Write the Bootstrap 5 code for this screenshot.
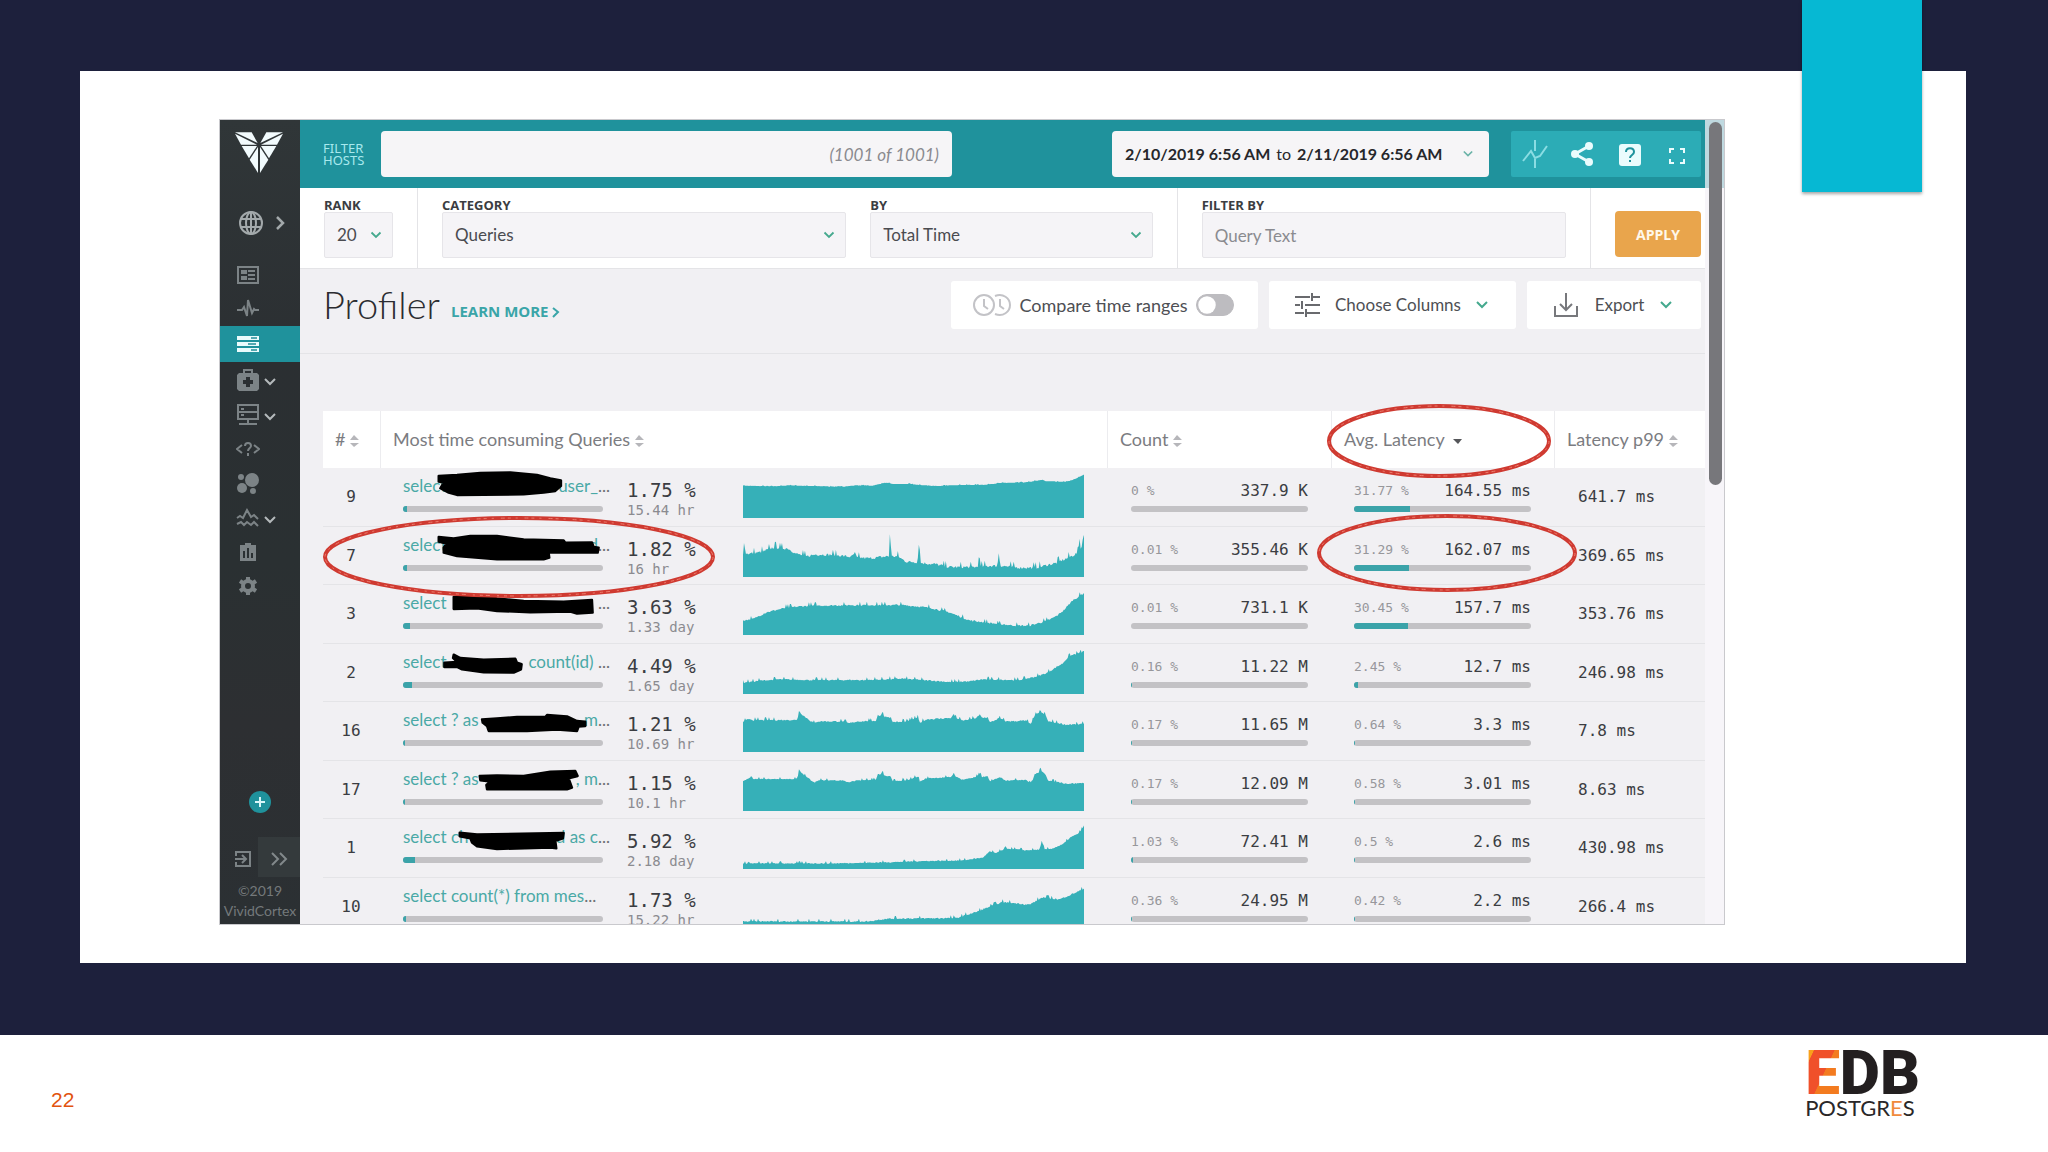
<!DOCTYPE html>
<html lang="en">
<head>
<meta charset="utf-8">
<meta name="viewport" content="width=device-width, initial-scale=1">
<title>Profiler</title>
<link href="https://cdn.jsdelivr.net/npm/bootstrap@5.3.0/dist/css/bootstrap.min.css" rel="stylesheet">
<style>
:root{--teal:#1f929c;--chart:#36b0b8;--ink:#3b3d42;--soft:#7b7c81;--line:#e4e4e7;--panel:#f1f0f3}
body{font-family:Lato,"Open Sans",sans-serif;color:var(--ink);background:#fff}
button,input,select{font-family:inherit}
.stage{background:#1d203c;padding:71px 82px 72px 80px;min-height:0}
.sheet{background:#fff;padding:48px 241px 38px 139px;min-height:0}
.ribbon{position:absolute;top:0;right:126px;width:120px;height:192px;background:#06b8d3;box-shadow:0 2px 3px rgba(0,0,0,.35)}
.slide-foot{height:117px;padding:0 128px 0 51px}
.page-no{font:21px "Liberation Sans",sans-serif;color:#e2530f;padding-top:12px}
.app{border:1px solid #c9c9cd;background:var(--panel);overflow:hidden;min-height:0}

.side{width:80px;flex:none;background:linear-gradient(#303638,#2b2f32 30%,#2a3032 55%,#2d2f32 75%,#2b3033);color:#7c8386}
.side a,.side button{color:inherit;background:none;border:0;padding:0}
.side .brand{height:79px;padding:12px 0 0 15px}
.side .globe{height:48px;padding-left:18px;color:#a3a9ab;gap:11px}
.menu{padding-top:11px}
.menu a{height:34px;padding-left:16px;gap:4px}
.menu a.sub{height:35px}
.menu a.on{height:36px;background:var(--teal);color:#e9fbfc}
.menu .chev{color:#b4b9bb}
.side .collapse-btn{width:42px;height:40px;background:#343a3c;color:#82898b}
.side .exit-btn{width:38px;padding-left:8px}
.copyright{font-size:14px;line-height:20px;color:#74797b;padding:4px 0 3px}

.topbar{background:var(--teal);height:68px;padding:0 4px 0 23px}
.host-label{width:58px;font:13px/12px "Noto Sans",sans-serif;color:#a8e9ee}
.host-input{height:46px;border:0;border-radius:4px;background:#f6f5f7;text-align:right;padding:0 13px;margin-right:160px;font-size:17px;min-width:0}
.host-input::placeholder{color:#8a8a8f;font-style:italic}
.dates{height:46px;border:0;border-radius:4px;background:#f6f5f7;width:377px;padding:0 16px 0 13px;gap:6px;font-size:16px;color:#26272b;margin-right:22px}
.tools{height:46px;width:190px;background:#2cacb6;border-radius:2px}
.tools button{background:none;border:0;padding:0;width:48px;color:#eafcfd}

.filters{background:#fff;height:81px;border-bottom:1px solid var(--line)}
.grp{padding:11px 24px 0;border-right:1px solid var(--line)}
.grp label{display:block;font:bold 13px/12px "Open Sans",sans-serif;color:#3b3d42;height:13px}
.field{width:100%;height:46px;border:1px solid #e6e5e9;border-radius:2px;background-color:#f5f4f7;font-size:17px;color:#4a4b50;padding:0 12px;box-shadow:none}
select.field{background-image:url("data:image/svg+xml,%3Csvg xmlns='http://www.w3.org/2000/svg' viewBox='0 0 12 12'%3E%3Cpath d='M1.500 3.500l4.500 4.500 4.500-4.500' fill='none' stroke='%2345a98e' stroke-width='1.800'/%3E%3C/svg%3E");background-size:12px;background-position:right 10px center;padding-right:26px}
.field::placeholder{color:#8a8b90;opacity:1}
.g-rank{width:118px;flex:none}
.g-pair{flex:712 1 0;gap:24px}
.f-cat{flex:405 1 0}.f-by{flex:283 1 0}
.g-text{flex:365 1 0}
.apply{width:86px;height:46px;margin:23px 4px 0 24px;border:0;border-radius:4px;background:#e9a54c;color:#fff8ea;font:bold 14px "Open Sans",sans-serif}

.titlebar{height:85px;border-bottom:1px solid var(--line);padding:12px 4px 0 23px;gap:11px}
.titlebar h1{font-weight:300;font-size:38px;line-height:46px;color:#2b2c30;margin:0}
.learn{font:bold 15px/46px "Open Sans",sans-serif;color:#3aa5a8;text-decoration:none;padding-top:7px}
.tile{height:48px;border:0;border-radius:3px;background:#fff;font-size:17px;color:#4e4f54}
.tile-cmp{width:307px;padding:0 24px 0 22px;font-size:18px}.tile-col{width:247px;padding:0 28px 0 25px}.tile-exp{width:174px;padding:0 29px 0 26px}
.tile .form-check-input{width:38px;height:22px;margin:0;background-color:#bdbcc0;border-color:#bdbcc0;box-shadow:none;float:none;--bs-form-switch-bg:url("data:image/svg+xml,%3Csvg xmlns='http://www.w3.org/2000/svg' viewBox='-4 -4 8 8'%3E%3Ccircle r='3.500' fill='%23fff'/%3E%3C/svg%3E");background-image:var(--bs-form-switch-bg)}

.grid-wrap{padding:57px 0 0 23px;min-height:0}
.qtable{width:100%;table-layout:fixed;border-collapse:separate;border-spacing:0}
.qtable th{height:57px;background:#fff;font-weight:400;font-size:18px;color:var(--soft);padding:0 0 0 12px;border-right:1px solid #ececef}
.qtable th:last-child{border-right:0}
.qtable td{height:58px;padding:0;border-bottom:1px solid var(--line);vertical-align:top}
.qtable tr:nth-child(odd) td{height:59px}
.c-rank{width:58px}.c-count{width:224px}.c-avg{width:223px}.c-p99{width:150px}
.sort{color:#b6b6ba;margin-left:5px}
.mono{font-family:"DejaVu Sans Mono","Liberation Mono",monospace}
.qtable .rank{font-size:16px;line-height:57px;text-align:center;padding-right:2px}
.qtable .q{padding-left:22px}
.qname{width:207px;padding-top:6px}
.qname a{color:#4aa9a6;text-decoration:none;font-size:17px;line-height:24px;height:24px;white-space:pre}
.dots{color:#6d6e72}
.meter{height:6px;border-radius:3px;background:#c3c2c5;overflow:hidden;margin-top:8px}
.qname .meter{width:200px}
.meter>div{height:6px;background:#3ba3a9;min-width:0}
.share{width:133px;flex:none;padding:10px 0 0 17px;font-size:19px;line-height:24px;white-space:nowrap}
.share div+div{font-size:14px;line-height:16px;color:#8b8b90}
.spark{height:44px;margin:6px 24px 0 0;display:block;min-width:0}
.num{padding-top:13px}
.num .top{height:17px;line-height:20px;font-size:16px;white-space:nowrap}
.num .pct{font-size:13px;color:#97979b}
.n-count{margin-left:23px;width:177px}
.n-avg{margin-left:22px;width:177px}
.qtable .p99{font-size:16px;line-height:57px;padding-left:23px;white-space:nowrap}
.blot{position:absolute;left:0;top:0;width:210px;height:59px}
.ring{position:absolute;overflow:visible}
.ring-query{left:24px;top:163px;width:391px;height:81px}
.ring-head{right:154px;top:51px;width:223px;height:72px}
.ring-cell{right:129px;top:161px;width:258px;height:77px}
.scroll{width:19px;flex:none;background:linear-gradient(#bfd9e0 0 68px,#f7f5f9 68px)}
.thumb{width:13px;height:363px;border-radius:7px;background:#77777b;margin:2px 0 0 4px}
.logo-edb{font:900 62px/44px Roboto,sans-serif;color:#231f20}
.logo-edb .e{background:linear-gradient(115deg,#f9a11b 22%,#f0502a 23% 52%,#f37b20 53%);-webkit-background-clip:text;background-clip:text;color:transparent}
.logo-sub{font:22px/26px Lato,sans-serif;color:#2a2728}
.logo-sub span{color:#f08a3c}
</style>
<script src="https://cdn.jsdelivr.net/npm/bootstrap@5.3.0/dist/js/bootstrap.bundle.min.js"></script>
</head>
<body>
<div class="vh-100 d-flex flex-column position-relative">
 <div class="stage flex-grow-1 d-flex">
  <div class="sheet flex-grow-1 d-flex">
   <div class="app flex-grow-1 d-flex">

    <aside class="side d-flex flex-column">
     <a href="#" class="brand d-block" aria-label="Home"><svg width="48" height="44" viewBox="0 0 144 130" fill="#f2fbfd"><path d="M0 0h50l18 32z"/><path d="M0 4l66 33H18z"/><path d="M94 0h50L76 32z"/><path d="M144 4L78 37h48z"/><path d="M20 41h46L42 78z"/><path d="M78 41h46l-22 37z"/><path d="M69 44v78L44 82z"/><path d="M75 44v78l25-40z"/></svg></a>
     <a href="#" class="globe d-flex align-items-center" aria-label="Environments"><svg width="26" height="26" viewBox="0 0 26 26" fill="none" stroke="currentColor" stroke-width="2"><circle cx="13" cy="13" r="11"/><ellipse cx="13" cy="13" rx="5" ry="11"/><path d="M3 9h20M3 17h20M13 2v22"/></svg><svg width="10" height="16" viewBox="0 0 10 16" fill="none" stroke="currentColor" stroke-width="2.500"><path d="M2 2l6 6-6 6"/></svg></a>
     <nav class="menu d-flex flex-column">
      <a href="#" class="d-flex align-items-center" aria-label="Summary"><svg width="24" height="24" viewBox="0 0 24 24" fill="currentColor"><path d="M1 3h22v18H1zM3 5v14h18V5z" fill-rule="evenodd"/><path d="M5 7h6v4H5zM5 13h6v4H5zM12 7h7v2h-7zM12 11h7v2h-7zM12 15h7v2h-7z"/></svg></a>
      <a href="#" class="d-flex align-items-center" aria-label="Activity"><svg width="24" height="24" viewBox="0 0 24 24" fill="none" stroke="currentColor" stroke-width="2"><path d="M1 13h5l2-3 3 9 1-16 4 13 2-4 1 1h4"/></svg></a>
      <a href="#" class="on d-flex align-items-center" aria-label="Profiler"><svg width="24" height="24" viewBox="0 0 24 24" fill="currentColor"><path d="M1 4h22v4H1zM1 10h22v4H1zM1 16h22v4H1z"/><path d="M15 5h6v2h-6zM12 11h8v2h-8zM15 17h6v2h-6z" fill="#55a9b1"/></svg></a>
      <a href="#" class="sub d-flex align-items-center" aria-label="Health"><svg width="24" height="24" viewBox="0 0 24 24"><path fill="currentColor" fill-rule="evenodd" d="M7 5V1h10v4h4l2 2v14l-2 2H3l-2-2V7l2-2zM9 3v2h6V3zM10 9v3H7v4h3v3h4v-3h3v-4h-3V9z"/></svg><svg class="chev" width="12" height="12" viewBox="0 0 12 12" fill="none" stroke="currentColor" stroke-width="2"><path d="M1 5l5 5 5-5"/></svg></a>
      <a href="#" class="sub d-flex align-items-center" aria-label="Hosts"><svg width="24" height="24" viewBox="0 0 24 24" fill="none" stroke="currentColor" stroke-width="2"><path d="M2 2h20v14H2zM2 9h20M12 16v5M3 21h18M5 6h3M5 12h3"/></svg><svg class="chev" width="12" height="12" viewBox="0 0 12 12" fill="none" stroke="currentColor" stroke-width="2"><path d="M1 5l5 5 5-5"/></svg></a>
      <a href="#" class="d-flex align-items-center" aria-label="Queries"><svg width="24" height="24" viewBox="0 0 24 24" fill="none" stroke="currentColor" stroke-width="2"><path d="M6 8l-5 4 5 4M18 8l5 4-5 4M9 9c0-4 6-4 6 0 0 2-3 2-3 5M12 16v3"/></svg></a>
      <a href="#" class="d-flex align-items-center" aria-label="Explorer"><svg width="24" height="24" viewBox="0 0 24 24" fill="currentColor"><circle cx="16" cy="9" r="7"/><circle cx="5" cy="6" r="3"/><circle cx="6" cy="17" r="5"/><circle cx="17" cy="20" r="3"/></svg></a>
      <a href="#" class="sub d-flex align-items-center" aria-label="Charts"><svg width="24" height="24" viewBox="0 0 24 24" fill="none" stroke="currentColor" stroke-width="2"><path d="M1 12l3-2 3 2 4-8 4 7 3-2 4 4M1 18l4-2 3 3 3-3 4 3 3-3 4 4"/></svg><svg class="chev" width="12" height="12" viewBox="0 0 12 12" fill="none" stroke="currentColor" stroke-width="2"><path d="M1 5l5 5 5-5"/></svg></a>
      <a href="#" class="d-flex align-items-center" aria-label="Reports"><svg width="24" height="24" viewBox="0 0 24 24"><path fill="currentColor" fill-rule="evenodd" d="M4 5h5V3h6v2h5v16H4zM7 11v7h2v-7zM11 8v10h2V8zM15 13v5h2v-5z"/></svg></a>
      <a href="#" class="d-flex align-items-center" aria-label="Settings"><svg width="24" height="24" viewBox="0 0 24 24" fill="none" stroke="currentColor"><circle cx="12" cy="12" r="5" stroke-width="4"/><path d="M12 3v3M12 18v3M4 7l3 2M17 15l3 2M4 17l3-2M17 9l3-2" stroke-width="4"/></svg></a>
     </nav>
     <div class="mt-auto text-center pb-4"><button aria-label="Add"><svg width="22" height="22" viewBox="0 0 22 22"><circle cx="11" cy="11" r="11" fill="#1f929c"/><path d="M11 6v10M6 11h10" stroke="#d9f7f9" stroke-width="2"/></svg></button></div>
     <div class="d-flex"><button class="exit-btn" aria-label="Log out"><svg width="18" height="18" viewBox="0 0 18 18" fill="none" stroke="currentColor" stroke-width="2"><path d="M2 6V2h14v14H2v-4M1 9h10M8 5l4 4-4 4"/></svg></button><button class="collapse-btn" aria-label="Expand menu"><svg width="18" height="14" viewBox="0 0 18 14" fill="none" stroke="currentColor" stroke-width="2"><path d="M2 1l6 6-6 6M10 1l6 6-6 6"/></svg></button></div>
     <div class="copyright text-center">©2019<br>VividCortex</div>
    </aside>

    <main class="flex-grow-1 d-flex flex-column overflow-hidden">
     <header class="topbar d-flex align-items-center flex-shrink-0">
      <label class="host-label" for="hosts">FILTER<br>HOSTS</label>
      <input id="hosts" class="host-input flex-grow-1" placeholder="(1001 of 1001)">
      <button class="dates d-flex align-items-center"><strong>2/10/2019 6:56 AM</strong><span>to</span><strong>2/11/2019 6:56 AM</strong><svg class="ms-auto" width="10" height="10" viewBox="0 0 12 12" fill="none" stroke="#6bb3a8" stroke-width="2"><path d="M1 3l5 5 5-5"/></svg></button>
      <div class="tools d-flex align-items-center">
       <button aria-label="Annotations"><svg width="26" height="30" viewBox="0 0 26 30" fill="none" stroke="#8adde3" stroke-width="2"><path d="M1 22l8-10 4 7 5-2 7-10M13 1v11M13 20v9"/></svg></button>
       <button aria-label="Share"><svg width="24" height="26" viewBox="0 0 24 26" fill="currentColor"><circle cx="5" cy="13" r="4"/><circle cx="19" cy="5" r="4"/><circle cx="19" cy="21" r="4"/><path d="M19 5L5 13l14 8" fill="none" stroke="currentColor" stroke-width="3"/></svg></button>
       <button aria-label="Help"><svg width="22" height="22" viewBox="0 0 22 22" fill="none"><rect width="22" height="22" rx="3" fill="currentColor"/><path d="M7 8c0-5 8-5 8 0 0 3-4 3-4 6M11 16v2" stroke="#1f929c" stroke-width="2"/></svg></button>
       <button aria-label="Full screen"><svg width="18" height="18" viewBox="0 0 18 18" fill="none" stroke="currentColor" stroke-width="2"><path d="M2 6V2h4M12 2h4v4M16 12v4h-4M6 16H2v-4"/></svg></button>
      </div>
     </header>

     <form class="filters d-flex flex-shrink-0">
      <div class="grp g-rank"><label for="rank">RANK</label><select id="rank" class="form-select field"><option>20</option></select></div>
      <div class="grp g-pair d-flex">
       <div class="f-cat"><label for="cat">CATEGORY</label><select id="cat" class="form-select field"><option>Queries</option></select></div>
       <div class="f-by"><label for="by">BY</label><select id="by" class="form-select field"><option>Total Time</option></select></div>
      </div>
      <div class="grp g-text"><label for="qt">FILTER BY</label><input id="qt" class="field" placeholder="Query Text"></div>
      <button type="button" class="apply">APPLY</button>
     </form>

     <div class="titlebar d-flex flex-shrink-0">
      <h1>Profiler</h1>
      <a href="#" class="learn me-auto">LEARN MORE <svg width="8" height="11" viewBox="0 0 8 11" fill="none" stroke="currentColor" stroke-width="2"><path d="M1 1l5 4-5 5"/></svg></a>
      <div class="tile tile-cmp d-flex align-items-center justify-content-between"><svg width="38" height="22" viewBox="0 0 38 22" fill="none" stroke="#c3c3c7" stroke-width="2"><circle cx="11" cy="11" r="10"/><path d="M22 2c8-3 15 2 15 9s-7 12-15 9M11 5v7l4 3M27 5v7l4 3"/></svg><label for="cmp">Compare time ranges</label><div class="form-switch p-0 d-flex"><input id="cmp" type="checkbox" role="switch" class="form-check-input"></div></div>
      <button class="tile tile-col d-flex align-items-center justify-content-between"><svg width="26" height="24" viewBox="0 0 26 24" fill="none" stroke="#696a6e" stroke-width="2"><path d="M1 4h15M19 4h7M18 0v8M1 12h5M11 12h15M8 8v8M1 20h9M13 20h13M12 16v8"/></svg>Choose Columns<svg width="12" height="12" viewBox="0 0 12 12" fill="none" stroke="#45a98e" stroke-width="2"><path d="M1 3l5 5 5-5"/></svg></button>
      <button class="tile tile-exp d-flex align-items-center justify-content-between"><svg width="26" height="26" viewBox="0 0 26 26" fill="none" stroke="#77787c" stroke-width="2"><path d="M2 14v10h22V14M13 1v16M7 12l6 6 6-6"/></svg>Export<svg width="12" height="12" viewBox="0 0 12 12" fill="none" stroke="#45a98e" stroke-width="2"><path d="M1 3l5 5 5-5"/></svg></button>
     </div>

     <div class="grid-wrap position-relative flex-grow-1 overflow-hidden">
      <table class="qtable">
       <thead><tr>
        <th class="c-rank" scope="col">#<svg class="sort" width="9" height="12" viewBox="0 0 9 12" fill="currentColor"><path d="M0 5l4-5 5 5zM0 8h9l-5 4z"/></svg></th>
        <th scope="col">Most time consuming Queries<svg class="sort" width="9" height="12" viewBox="0 0 9 12" fill="currentColor"><path d="M0 5l4-5 5 5zM0 8h9l-5 4z"/></svg></th>
        <th class="c-count" scope="col">Count<svg class="sort" width="9" height="12" viewBox="0 0 9 12" fill="currentColor"><path d="M0 5l4-5 5 5zM0 8h9l-5 4z"/></svg></th>
        <th class="c-avg" scope="col">Avg. Latency<svg class="ms-2" width="9" height="12" viewBox="0 0 9 12" fill="#55565a"><path d="M0 4h9l-4 5z"/></svg></th>
        <th class="c-p99" scope="col">Latency p99<svg class="sort" width="9" height="12" viewBox="0 0 9 12" fill="currentColor"><path d="M0 5l4-5 5 5zM0 8h9l-5 4z"/></svg></th>
       </tr></thead>
       <tbody id="rows"></tbody>
      </table>
      <svg class="ring ring-query" viewBox="0 0 391 81"><ellipse cx="195" cy="40" rx="194" ry="39"/></svg>
      <svg class="ring ring-head" viewBox="0 0 223 72"><ellipse cx="111" cy="36" rx="110" ry="35"/></svg>
      <svg class="ring ring-cell" viewBox="0 0 258 77"><ellipse cx="129" cy="38" rx="128" ry="37"/></svg>
     </div>
    </main>
    <div class="scroll"><div class="thumb"></div></div>
   </div>
  </div>
 </div>
 <div class="ribbon"></div>
 <footer class="slide-foot d-flex justify-content-between align-items-start flex-shrink-0">
  <div class="page-no align-self-center">22</div>
  <div class="pt-3"><div class="logo-edb"><span class="e">E</span>DB</div><div class="logo-sub">POSTGR<span>E</span>S</div></div>
 </footer>
</div>

<script>
// Each row: rank, query head, query tail, share, total time, count share, count, latency share, latency, p99
const data = [
 [9,'select','user_',1.75,'15.44 hr','0','337.9 K',31.77,'164.55','641.7'],
 [7,'select','d',1.82,'16 hr','0.01','355.46 K',31.29,'162.07','369.65'],
 [3,'select','',3.63,'1.33 day','0.01','731.1 K',30.45,'157.7','353.76'],
 [2,'select','count(id) ',4.49,'1.65 day','0.16','11.22 M',2.45,'12.7','246.98'],
 [16,'select ? as','m',1.21,'10.69 hr','0.17','11.65 M',0.64,'3.3','7.8'],
 [17,'select ? as',', m',1.15,'10.1 hr','0.17','12.09 M',0.58,'3.01','8.63'],
 [1,'select ch','d as c',5.92,'2.18 day','1.03','72.41 M',0.5,'2.6','430.98'],
 [10,'select count(*) from mes','',1.73,'15.22 hr','0.36','24.95 M',0.42,'2.2','266.4']
];
// Marker strokes that hide part of a query, three units to the pixel
const blots = [
 '107,24 162,21 232,15 322,13 402,21 442,31 474,37 474,54 457,69 422,74 362,79 162,81 137,74 112,61 122,44 107,41',
 '107,30 152,34 202,27 282,27 362,37 482,40 487,47 567,46 572,60 587,62 584,77 522,77 437,77 439,92 422,97 282,97 162,87 122,77 122,62 130,50 107,44',
 '152,36 242,32 282,40 362,48 482,50 567,45 569,83 522,86 502,80 382,82 282,78 222,70 152,72',
 '152,32 172,42 242,47 337,44 342,56 356,60 354,76 332,86 242,85 177,76 162,69 124,69 124,56 162,54 150,42',
 '237,52 282,49 342,45 427,45 432,39 492,43 522,57 547,59 547,72 527,74 522,87 462,83 372,87 257,87 252,72 239,62',
 '230,45 282,43 362,45 442,32 517,30 524,45 497,52 507,80 492,85 252,85 250,72 262,62 232,58',
 '170,41 222,46 482,42 480,58 457,66 460,88 442,86 282,90 222,82 207,71 202,58 170,52'
];
// Sparklines: key points (x, height) in 1/3 px units, and jitter
const busy = [0,90,20,100,30,96,160,96,164,100,168,124,172,118,188,104,205,92,215,86,225,92,300,92,318,86,345,92,400,94,405,112,412,108,420,120,424,106,445,104,448,90,478,90,481,104,485,90,526,104,530,88,550,98,625,102,633,114,640,102,660,94,700,102,712,112,718,102,735,104,742,88,770,102,790,92,850,94,862,84,870,94,876,110,888,116,892,130,896,118,908,112,916,92,950,86,970,82,1024,84];
const shapes = [
 [[0,97,90,95,140,98,200,96,300,94,340,98,390,97,410,102,430,106,450,102,500,102,540,98,590,96,650,99,730,100,770,105,850,107,890,113,900,115,910,110,970,109,990,114,1024,130],1],
 [[0,70,3,106,8,70,20,70,60,76,95,90,120,86,134,86,160,70,190,62,220,68,280,66,325,60,336,72,342,58,380,56,432,62,438,62,441,128,447,62,465,62,490,46,524,44,529,112,534,42,580,38,620,30,705,30,709,74,713,32,764,34,768,72,773,34,830,28,880,28,940,42,990,64,1006,74,1011,118,1015,74,1021,124,1024,124],8],
 [[0,44,30,48,70,68,130,82,200,88,350,90,480,90,560,82,620,68,680,44,760,34,820,28,860,28,910,42,940,56,965,76,990,104,1024,126],5],
 [[0,34,50,40,110,44,200,42,370,42,480,46,570,40,620,36,680,38,720,44,830,42,880,52,910,62,940,80,960,92,980,114,1024,128],4],
 [busy,4],[busy,3],
 [[0,16,14,18,17,24,20,17,280,17,420,20,550,24,660,26,720,34,740,52,760,48,790,62,850,56,890,58,898,82,905,58,930,62,960,74,985,96,1010,108,1024,130],3],
 [[0,20,380,20,430,28,640,30,700,48,740,64,780,78,860,70,900,92,950,86,985,100,1024,118],4]
];
let seed = 7;
const rnd = () => (seed = seed * 16807 % 2147483647) / 2147483647;
function area([pts, jit]) {
  let d = 'M0 132', k = 0;
  for (let x = 0; x <= 1026; x += 3) {
    while (k + 3 < pts.length - 1 && x > pts[k + 2]) k += 2;
    const x0 = pts[k], y0 = pts[k + 1], x1 = pts[k + 2], y1 = pts[k + 3];
    const y = y0 + (y1 - y0) * (x - x0) / (x1 - x0);
    const r = rnd(), j = r > .9 ? jit * 2 : (r - .5) * jit;
    d += 'L' + x + ' ' + Math.round(132 - y - j);
  }
  return d + 'V132z';
}
const meter = p => `<div class="meter"><div style="width:${p}%"></div></div>`;
document.getElementById('rows').innerHTML = data.map((r, i) => `<tr>
 <td class="mono rank">${r[0]}</td>
 <td class="q"><div class="d-flex">
  <div class="qname position-relative flex-shrink-0"><a href="#" class="d-flex${r[2] || i === 2 ? ' justify-content-between' : ''}"><span>${r[1]}</span><span>${r[2]}<span class="dots">...</span></span></a>${meter(r[3])}${blots[i] ? `<svg class="blot" viewBox="0 0 630 177"><polygon points="${blots[i]}" stroke="#000" stroke-width="7" stroke-linejoin="round"/></svg>` : ''}</div>
  <div class="mono share"><div>${r[3]} %</div><div>${r[4]}</div></div>
  <svg class="spark mt-auto flex-grow-1" viewBox="0 0 1024 132" preserveAspectRatio="none"><path d="${area(shapes[i])}" fill="#36b0b8"/></svg>
 </div></td>
 <td><div class="num n-count"><div class="top mono d-flex justify-content-between"><span class="pct">${r[5]} %</span><span>${r[6]}</span></div>${meter(r[5])}</div></td>
 <td><div class="num n-avg"><div class="top mono d-flex justify-content-between"><span class="pct">${r[7]} %</span><span>${r[8]} ms</span></div>${meter(r[7])}</div></td>
 <td class="mono p99">${r[9]} ms</td></tr>`).join('');
// Hand-drawn rings: a solid red line with a broken lighter edge over it
document.querySelectorAll('.ring ellipse').forEach(e => {
  e.setAttribute('fill', 'none'); e.setAttribute('stroke', '#cf3a31'); e.setAttribute('stroke-width', '4');
  const edge = e.cloneNode(); edge.setAttribute('stroke', '#ee7d6d'); edge.setAttribute('stroke-width', '1');
  edge.setAttribute('stroke-dasharray', '3 5 2 7 4 3'); e.after(edge);
});
</script>
</body>
</html>
